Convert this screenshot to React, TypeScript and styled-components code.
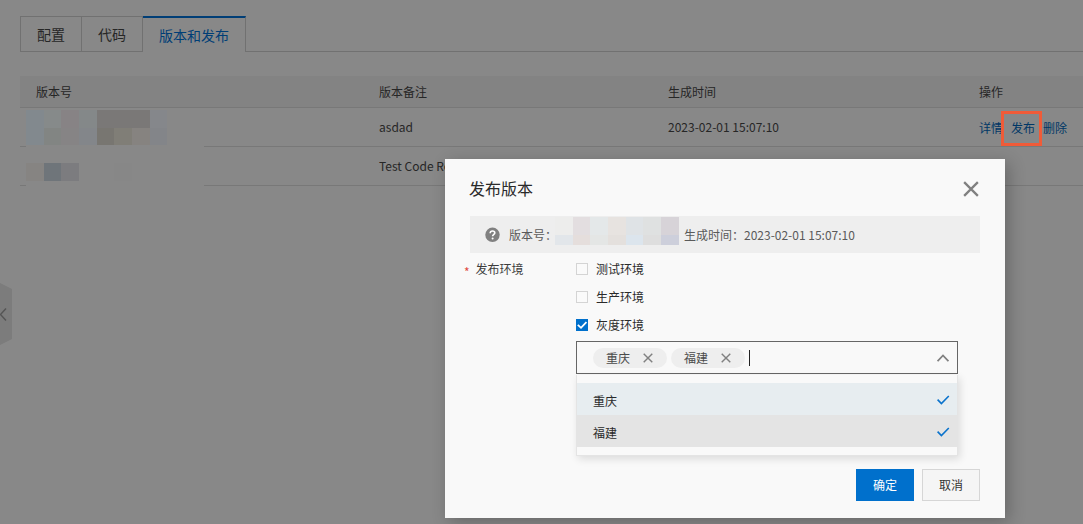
import React, { useState } from "react";
import styled, { createGlobalStyle } from "styled-components";

const GlobalStyle = createGlobalStyle`
  *, *::before, *::after { box-sizing: border-box; }
  body {
    margin: 0;
    background: #888888;
    color: #262626;
    font: 12px/20px "Noto Sans CJK SC", "Open Sans", sans-serif;
  }
  button, input { font: inherit; color: inherit; }
`;

const Page = styled.main`
  min-height: 100vh;
  padding: 16px 0 0 20px;
  overflow: hidden;
`;

const Tabs = styled.nav`
  display: flex;
  height: 36px;
  margin-bottom: 24px;
  &::after {
    content: "";
    flex: 1;
    border-bottom: 1px solid #717171;
  }
`;

const Tab = styled.button<{ $active?: boolean }>`
  padding: 0 16px 1px;
  border: solid #717171;
  border-width: ${(p) => (p.$active ? "2px 1px 0 0" : "1px 1px 1px 0")};
  border-top-color: ${(p) => (p.$active ? "#003e76" : "#717171")};
  background: none;
  color: ${(p) => (p.$active ? "#003e76" : "#262626")};
  font-size: 14px;
  line-height: 20px;
  &:first-child { border-left-width: 1px; }
`;

const VersionTable = styled.table`
  width: 100%;
  table-layout: fixed;
  border-collapse: separate;
  border-spacing: 0;
`;

const HeadCell = styled.th<{ $share?: string }>`
  width: ${(p) => p.$share ?? "auto"};
  height: 32px;
  padding: 0 16px;
  border-bottom: 1px solid #787878;
  background: #838383;
  font-weight: 400;
  text-align: left;
`;

const Cell = styled.td`
  position: relative;
  height: 39px;
  padding: 0 16px;
  border-bottom: 1px solid #787878;
  white-space: nowrap;
`;

const Mask = styled.svg`
  position: absolute;
  top: 0;
  left: 6px;
  display: block;
`;

const Actions = styled.div`
  display: flex;
  gap: 8px;
  padding-top: 2px;
`;

const ActionLink = styled.a<{ $marked?: boolean }>`
  position: relative;
  color: #003766;
  text-decoration: none;
  ${(p) =>
    p.$marked &&
    `&::after {
      content: "";
      position: absolute;
      inset: -7px -7px -8px -10px;
      border: 3px solid #f05b38;
    }`}
`;

const SideHandle = styled.button`
  position: fixed;
  left: 0;
  top: 283px;
  padding: 0;
  border: 0;
  background: none;
  svg { display: block; }
`;

const Dialog = styled.section`
  position: absolute;
  top: 159px;
  right: 78px;
  width: 560px;
  padding: 16px 25px 17px;
  background: #f9f9f9;
  color: #2a2a2a;
  box-shadow: 4px 4px 16px rgba(0, 0, 0, 0.24);
`;

const DialogHeader = styled.header`
  display: flex;
  align-items: center;
  justify-content: space-between;
  height: 28px;
  margin: 0 1px 13px -1px;
`;

const Title = styled.h2`
  margin: 0;
  padding-bottom: 2px;
  font-size: 16px;
  line-height: 24px;
  font-weight: 400;
`;

const IconButton = styled.button`
  display: flex;
  padding: 0;
  border: 0;
  background: none;
`;

const InfoBar = styled.div`
  display: flex;
  align-items: center;
  height: 37px;
  padding-left: 15px;
  background: #eeeeee;
  color: #5a5a5a;
  svg { flex: none; }
`;

const VersionBlocks = styled.svg`
  align-self: flex-start;
  margin-top: 1px;
`;

const InfoLabel = styled.span`
  width: 46px;
  margin-left: 9px;
  white-space: nowrap;
`;

const InfoTime = styled.span`
  margin-left: 5px;
`;

const Field = styled.fieldset`
  display: grid;
  grid-template-columns: 106px 1fr;
  margin: 6px 22px 0 0;
  padding: 0;
  border: 0;
`;

const FieldLabel = styled.div`
  margin-left: -6px;
  display: flex;
  gap: 6px;
  color: #3c3c3c;
`;

const Required = styled.span`
  padding-top: 3px;
  color: #e04a42;
`;

const Options = styled.div`
  display: flex;
  flex-direction: column;
  gap: 8px;
`;

const CheckLabel = styled.label`
  display: flex;
  align-items: center;
  gap: 8px;
  height: 20px;
`;

const Check = styled.input`
  appearance: none;
  width: 12px;
  height: 12px;
  margin: 0;
  border: 1px solid #d4d4d4;
  background: #fafafa;
  &:checked {
    border-color: #0070cc;
    background: #0070cc
      url("data:image/svg+xml,%3Csvg xmlns='http://www.w3.org/2000/svg' viewBox='0 0 10 10'%3E%3Cpath d='M0.8 4.8 4 7.8 9.4 2' fill='none' stroke='white' stroke-width='1.8'/%3E%3C/svg%3E");
  }
`;

const Picker = styled.div`
  margin-top: -2px;
`;

const SelectBox = styled.div`
  display: flex;
  align-items: center;
  gap: 4px;
  height: 33px;
  padding: 0 8px 0 16px;
  border: 1px solid #666;
`;

const Tag = styled.span`
  display: flex;
  align-items: center;
  gap: 13px;
  height: 20px;
  padding: 0 14px 0 13px;
  border-radius: 10px;
  background: #eeeeee;
  color: #4a4a4a;
`;

const SearchInput = styled.input`
  flex: 1;
  min-width: 0;
  height: 16px;
  padding: 0;
  border: 0;
  border-left: 1px solid #222;
  outline: 0;
  background: none;
`;

const Menu = styled.ul`
  margin: 1px 0 0;
  padding: 8px 0;
  list-style: none;
  border: solid #e4e4e4;
  border-width: 0 1px 1px;
  box-shadow: 2px 3px 8px rgba(0, 0, 0, 0.12);
`;

const MenuItem = styled.li<{ $hover?: boolean }>`
  display: flex;
  align-items: center;
  justify-content: space-between;
  height: 32px;
  padding: 4px 7px 0 16px;
  background: ${(p) => (p.$hover ? "#e4e4e4" : "#e7edf0")};
  svg { margin-bottom: 3px; }
`;

const Footer = styled.footer`
  display: flex;
  justify-content: flex-end;
  gap: 8px;
  margin-top: 13px;
`;

const Button = styled.button<{ $primary?: boolean }>`
  width: 58px;
  height: 32px;
  padding: 0;
  border: 1px solid ${(p) => (p.$primary ? "#0070cc" : "#d6d6d6")};
  background: ${(p) => (p.$primary ? "#0070cc" : "#f5f5f5")};
  color: ${(p) => (p.$primary ? "#fff" : "#333")};
`;

type Block = [x: number, y: number, w: number, h: number, fill: string];

const Blocks = ({ items }: { items: Block[] }) => (
  <>
    {items.map(([x, y, w, h, fill], i) => (
      <rect key={i} x={x} y={y} width={w} height={h} fill={fill} />
    ))}
  </>
);

const firstVersion: Block[] = [
  [0, 0, 178, 39, "#888888"],
  [0, 2, 18, 35, "#82898e"],
  [18, 2, 17, 18, "#868a8a"],
  [35, 2, 18, 18, "#878385"],
  [53, 2, 18, 18, "#848889"],
  [71, 2, 53, 18, "#7a7877"],
  [124, 2, 17, 18, "#85878b"],
  [18, 20, 17, 17, "#828583"],
  [35, 20, 18, 17, "#868485"],
  [53, 20, 18, 17, "#83868a"],
  [71, 20, 17, 17, "#787671"],
  [88, 20, 18, 17, "#807e77"],
  [106, 20, 18, 17, "#868380"],
  [124, 20, 17, 17, "#838589"],
];

const secondVersion: Block[] = [
  [0, 0, 178, 39, "#888888"],
  [0, 16, 18, 18, "#868482"],
  [18, 16, 17, 18, "#6f757a"],
  [35, 16, 18, 18, "#7c7c7f"],
  [88, 16, 18, 18, "#878787"],
];

const dialogVersion: Block[] = [
  [0, 0, 18, 18, "#ededec"],
  [18, 0, 17, 18, "#e3dee0"],
  [35, 0, 18, 18, "#e4e8e9"],
  [53, 0, 18, 18, "#e7e3e0"],
  [71, 0, 17, 18, "#dfe3e6"],
  [88, 0, 18, 18, "#dfe1e1"],
  [106, 0, 18, 18, "#d7d3d8"],
  [0, 18, 18, 10, "#e2e6ea"],
  [18, 18, 17, 10, "#e5dedc"],
  [35, 18, 18, 10, "#e4e6e5"],
  [53, 18, 18, 10, "#e4e0dd"],
  [71, 18, 17, 10, "#dce5ed"],
  [88, 18, 18, 10, "#dedede"],
  [106, 18, 18, 10, "#cdcfdb"],
];

const Cross = ({ size, color, weight }: { size: number; color: string; weight: number }) => (
  <svg width={size} height={size} viewBox="0 0 14 14" aria-hidden="true">
    <path d="M1 1 13 13M13 1 1 13" fill="none" stroke={color} strokeWidth={weight} />
  </svg>
);

const Tick = () => (
  <svg width="14" height="12" viewBox="0 0 14 12" aria-hidden="true">
    <path d="M1.6 5.6 5.4 9.6 12.8 2" fill="none" stroke="#0b73cc" strokeWidth="1.6" />
  </svg>
);

const regions = ["重庆", "福建"];

export default function App() {
  const [checked, setChecked] = useState<Record<string, boolean>>({ 灰度环境: true });
  return (
    <>
      <GlobalStyle />
      <Page>
        <Tabs>
          <Tab type="button">配置</Tab>
          <Tab type="button">代码</Tab>
          <Tab type="button" $active>版本和发布</Tab>
        </Tabs>
        <VersionTable>
          <thead>
            <tr>
              <HeadCell $share="32.27%">版本号</HeadCell>
              <HeadCell $share="27.19%">版本备注</HeadCell>
              <HeadCell $share="29.26%">生成时间</HeadCell>
              <HeadCell>操作</HeadCell>
            </tr>
          </thead>
          <tbody>
            <tr>
              <Cell>
                <Mask width="178" height="39" aria-hidden="true"><Blocks items={firstVersion} /></Mask>
              </Cell>
              <Cell>asdad</Cell>
              <Cell>2023-02-01 15:07:10</Cell>
              <Cell>
                <Actions>
                  <ActionLink href="#detail">详情</ActionLink>
                  <ActionLink href="#publish" $marked>发布</ActionLink>
                  <ActionLink href="#delete">删除</ActionLink>
                </Actions>
              </Cell>
            </tr>
            <tr>
              <Cell>
                <Mask width="178" height="39" aria-hidden="true"><Blocks items={secondVersion} /></Mask>
              </Cell>
              <Cell>Test Code Re</Cell>
              <Cell />
              <Cell />
            </tr>
          </tbody>
        </VersionTable>
      </Page>

      <SideHandle type="button" aria-label="展开">
        <svg width="12" height="62" viewBox="0 0 12 62">
          <path d="M0 0 12 6V56L0 62Z" fill="#7c7c7c" />
          <path d="M6 25.5 0.5 31.5 6 37.5" fill="none" stroke="#555" strokeWidth="1.4" />
        </svg>
      </SideHandle>

      <Dialog role="dialog" aria-labelledby="dialog-title">
        <DialogHeader>
          <Title id="dialog-title">发布版本</Title>
          <IconButton type="button" aria-label="关闭">
            <Cross size={16} color="#808080" weight={2} />
          </IconButton>
        </DialogHeader>
        <InfoBar>
          <svg width="15" height="15" viewBox="0 0 15 15" aria-hidden="true">
            <circle cx="7.5" cy="7.8" r="7.2" fill="#808080" />
            <path d="M5.2 6.2C5.2 4.7 6.2 4 7.5 4S9.8 4.8 9.8 5.9C9.8 7.3 7.6 7.4 7.6 9.2" fill="none" stroke="#fff" strokeWidth="1.6" />
            <circle cx="7.6" cy="11.4" r="1" fill="#fff" />
          </svg>
          <InfoLabel>版本号：</InfoLabel>
          <VersionBlocks width="124" height="28" aria-hidden="true"><Blocks items={dialogVersion} /></VersionBlocks>
          <InfoTime>生成时间：2023-02-01 15:07:10</InfoTime>
        </InfoBar>
        <Field aria-labelledby="env-label">
          <FieldLabel id="env-label"><Required>*</Required>发布环境</FieldLabel>
          <Options>
            {["测试环境", "生产环境", "灰度环境"].map((name) => (
              <CheckLabel key={name}>
                <Check
                  type="checkbox"
                  checked={!!checked[name]}
                  onChange={(e) => setChecked({ ...checked, [name]: e.target.checked })}
                />
                {name}
              </CheckLabel>
            ))}
            <Picker>
              <SelectBox>
                {regions.map((name) => (
                  <Tag key={name}>
                    {name}
                    <IconButton type="button" aria-label={`移除${name}`}>
                      <Cross size={10} color="#808080" weight={2} />
                    </IconButton>
                  </Tag>
                ))}
                <SearchInput aria-label="选择地区" />
                <svg width="12" height="8" viewBox="0 0 12 8" aria-hidden="true">
                  <path d="M0.6 7.2 6 1.4 11.4 7.2" fill="none" stroke="#808080" strokeWidth="1.7" />
                </svg>
              </SelectBox>
              <Menu>
                <MenuItem>重庆<Tick /></MenuItem>
                <MenuItem $hover>福建<Tick /></MenuItem>
              </Menu>
            </Picker>
          </Options>
        </Field>
        <Footer>
          <Button type="button" $primary>确定</Button>
          <Button type="button">取消</Button>
        </Footer>
      </Dialog>
    </>
  );
}
